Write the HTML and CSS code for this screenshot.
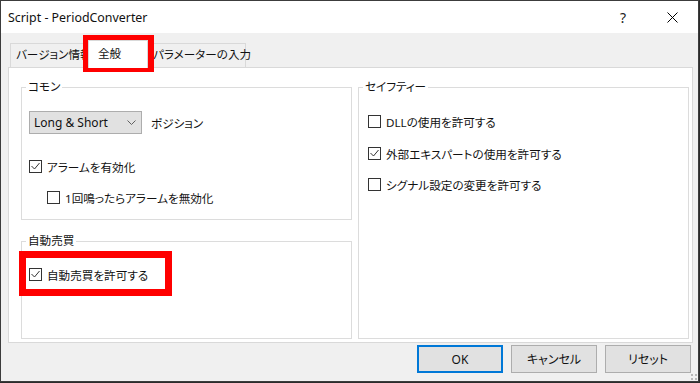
FILE: index.html
```html
<!DOCTYPE html>
<html lang="ja">
<head>
    <meta charset="UTF-8">
    <title>Script - PeriodConverter</title>
    <link rel="stylesheet" href="styles.css">
</head>
<body>
    <div class="window">
        <div class="titlebar">
            <span class="title">Script - PeriodConverter</span>
            <span class="tb-btn help">?</span>
            <span class="tb-btn close">
                <svg width="11" height="11" viewBox="0 0 11 11"><path d="M0.5 0.5 L10.5 10.5 M10.5 0.5 L0.5 10.5" stroke="#000" stroke-width="1" fill="none"/></svg>
            </span>
        </div>

        <div class="content">
            <div class="tabs">
                <div class="tab tab-first">バージョン情報</div>
                <div class="tab active">全般</div>
                <div class="tab tab-last">パラメーターの入力</div>
            </div>

            <div class="panel">
                <div class="col-left">
                    <fieldset class="group group-common">
                        <legend>コモン</legend>
                        <div class="select-row">
                            <div class="select">
                                <span>Long &amp; Short</span>
                                <svg width="9" height="5" viewBox="0 0 9 5"><path d="M0.5 0.5 L4.5 4.5 L8.5 0.5" stroke="#606060" fill="none"/></svg>
                            </div>
                            <span class="select-label">ポジション</span>
                        </div>
                        <label class="check row-alarm">
                            <span class="box"><svg width="11" height="11" viewBox="0 0 11 11"><path d="M1.5 5 L4.5 8 L9.5 2" stroke="#333" fill="none"/></svg></span>
                            アラームを有効化
                        </label>
                        <label class="check row-once">
                            <span class="box"></span>
                            1回鳴ったらアラームを無効化
                        </label>
                    </fieldset>

                    <fieldset class="group group-auto">
                        <legend>自動売買</legend>
                        <label class="check row-auto">
                            <span class="box"><svg width="11" height="11" viewBox="0 0 11 11"><path d="M1.5 5 L4.5 8 L9.5 2" stroke="#333" fill="none"/></svg></span>
                            自動売買を許可する
                        </label>
                    </fieldset>
                </div>

                <fieldset class="group group-safety">
                    <legend>セイフティー</legend>
                    <label class="check row-dll">
                        <span class="box"></span>
                        DLLの使用を許可する
                    </label>
                    <label class="check row-expert">
                        <span class="box"><svg width="11" height="11" viewBox="0 0 11 11"><path d="M1.5 5 L4.5 8 L9.5 2" stroke="#333" fill="none"/></svg></span>
                        外部エキスパートの使用を許可する
                    </label>
                    <label class="check row-signal">
                        <span class="box"></span>
                        シグナル設定の変更を許可する
                    </label>
                </fieldset>
            </div>

            <div class="buttons">
                <button class="btn btn-default">OK</button>
                <button class="btn">キャンセル</button>
                <button class="btn">リセット</button>
            </div>
        </div>

        <svg class="grip" width="7" height="7" viewBox="0 0 7 7">
            <rect x="5" y="1" width="2" height="2" fill="#b8b8b8"/>
            <rect x="1" y="5" width="2" height="2" fill="#b8b8b8"/>
            <rect x="5" y="5" width="2" height="2" fill="#b8b8b8"/>
            <rect x="1" y="1" width="2" height="2" fill="#b8b8b8"/>
        </svg>
    </div>

    <!-- 注目箇所の赤枠 -->
    <div class="mark mark-tab"></div>
    <div class="mark mark-auto"></div>
</body>
</html>
```

FILE: styles.css
```css
* {
    box-sizing: border-box;
}
body {
    margin: 0;
    background-color: #2b2b2b;
    font-family: "Noto Sans", "Noto Sans CJK JP", sans-serif;
    font-size: 11.6px;
    font-feature-settings: "palt";
    color: #111;
}
.window {
    position: relative;
    width: 699px;
    height: 382px;
    border: 1px solid #3c3c3c;
    background-color: #f0f0f0;
    display: flex;
    flex-direction: column;
}
.titlebar {
    height: 32px;
    background: #fff;
    display: flex;
    align-items: center;
    padding-left: 7px;
}
.title {
    flex: 1;
    font-size: 12.4px;
}
.tb-btn {
    display: flex;
    align-items: center;
    justify-content: center;
    height: 32px;
}
.help {
    width: 48px;
    font-size: 14px;
    color: #222;
}
.close {
    width: 50px;
    margin-right: 1px;
}
.content {
    padding: 7px 0 0 7px;
}
.tabs {
    display: flex;
    align-items: flex-end;
    height: 27px;
    padding-left: 2px;
}
.tab {
    height: 24px;
    line-height: 22px;
    border: 1px solid #d9d9d9;
    border-bottom: none;
    background: #f0f0f0;
    padding: 0 5px;
    white-space: nowrap;
}
.tab-first {
    width: 80px;
}
.tab.active {
    position: relative;
    z-index: 1;
    width: 60px;
    height: 28px;
    margin: 0 -2px -1px;
    padding-left: 9px;
    line-height: 25px;
    background: #fff;
}
.tab-last {
    width: 100px;
    padding-left: 6px;
}
.panel {
    width: 685px;
    height: 276px;
    background: #fff;
    border: 1px solid #d9d9d9;
    display: grid;
    grid-template-columns: 331px 331px;
    column-gap: 6px;
    padding: 12px 2px 3px 12px;
}
.col-left {
    display: flex;
    flex-direction: column;
    gap: 14px;
}
.group {
    margin: 0;
    padding: 0;
    border: 1px solid #dcdcdc;
    min-width: 0;
}
.group legend {
    padding: 0 2px;
    margin-left: 4px;
    line-height: 14px;
}
.group-common {
    height: 140px;
}
.group-auto {
    flex: 1;
}
.select-row {
    display: flex;
    align-items: center;
    margin: 17px 0 0 7px;
}
.select {
    width: 113px;
    height: 23px;
    background: #e1e1e1;
    border: 1px solid #adadad;
    display: flex;
    align-items: center;
    justify-content: space-between;
    padding: 0 5px 0 4px;
    font-size: 12px;
}
.select-label {
    margin-left: 9px;
}
.check {
    display: flex;
    align-items: center;
    height: 13px;
    gap: 5px;
    margin-left: 7px;
    white-space: nowrap;
}
.group-safety .check {
    margin-left: 9px;
}
.box {
    width: 13px;
    height: 13px;
    border: 1px solid #333;
    background: #fff;
    flex-shrink: 0;
}
.box svg {
    display: block;
}
.row-alarm {
    margin-top: 26px;
}
.check.row-once {
    margin-top: 18px;
    margin-left: 25px;
}
.row-auto {
    margin-top: 20px;
}
.row-dll {
    margin-top: 21px;
}
.row-expert {
    margin-top: 19px;
}
.row-signal {
    margin-top: 18px;
}
.buttons {
    display: flex;
    justify-content: flex-end;
    gap: 8px;
    padding-right: 7px;
    margin-top: 2px;
}
.btn {
    width: 86px;
    height: 28px;
    background: #e1e1e1;
    border: 1px solid #adadad;
    font-family: inherit;
    font-size: 12px;
    font-feature-settings: "palt";
    color: #111;
    padding: 0;
}
.btn-default {
    border: 2px solid #0078d7;
}
.grip {
    position: absolute;
    right: 1px;
    bottom: 1px;
}
.mark {
    position: absolute;
    border: 7px solid #ff0000;
}
.mark-tab {
    left: 83px;
    top: 35px;
    width: 71px;
    height: 37px;
}
.mark-auto {
    left: 19px;
    top: 251px;
    width: 153px;
    height: 45px;
}
```
